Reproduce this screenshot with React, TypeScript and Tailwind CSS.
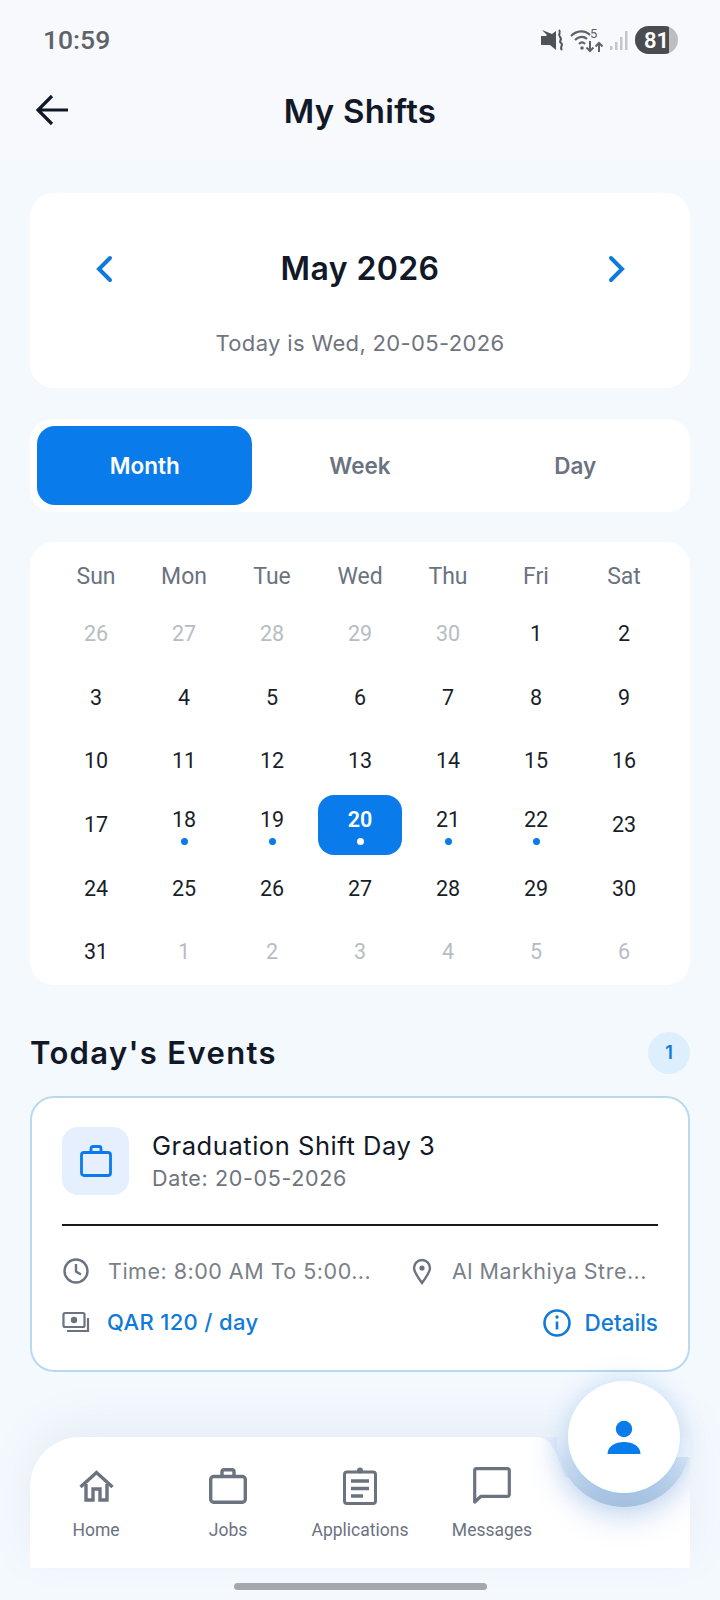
import React from "react";

const inter = "font-['Inter',sans-serif]";
const roboto = "font-['Roboto',sans-serif]";

type Cell = { d: number; muted?: boolean; dot?: boolean; sel?: boolean };

const rows: Cell[][] = [
  [{ d: 26, muted: true }, { d: 27, muted: true }, { d: 28, muted: true }, { d: 29, muted: true }, { d: 30, muted: true }, { d: 1 }, { d: 2 }],
  [{ d: 3 }, { d: 4 }, { d: 5 }, { d: 6 }, { d: 7 }, { d: 8 }, { d: 9 }],
  [{ d: 10 }, { d: 11 }, { d: 12 }, { d: 13 }, { d: 14 }, { d: 15 }, { d: 16 }],
  [{ d: 17 }, { d: 18, dot: true }, { d: 19, dot: true }, { d: 20, dot: true, sel: true }, { d: 21, dot: true }, { d: 22, dot: true }, { d: 23 }],
  [{ d: 24 }, { d: 25 }, { d: 26 }, { d: 27 }, { d: 28 }, { d: 29 }, { d: 30 }],
  [{ d: 31 }, { d: 1, muted: true }, { d: 2, muted: true }, { d: 3, muted: true }, { d: 4, muted: true }, { d: 5, muted: true }, { d: 6, muted: true }],
];

function DayCell({ c }: { c: Cell }) {
  return (
    <div className="h-[63.7px] flex items-center justify-center">
      <div className={`w-[84px] h-[60px] flex flex-col items-center justify-center ${c.dot ? "pt-[3px]" : ""} ${c.sel ? "bg-[#0a7bea] rounded-[16px]" : ""}`}>
        <span
          className={`text-[21.5px] leading-[26px] ${c.sel ? "text-white font-semibold" : c.muted ? "text-[#b9bcc2]" : "text-[#1a1f29]"}`}
        >
          {c.d}
        </span>
        {c.dot && <span className={`mt-[5px] w-[7px] h-[7px] rounded-full ${c.sel ? "bg-white" : "bg-[#0a7bea]"}`} />}
      </div>
    </div>
  );
}

function NavItem({ label, icon }: { label: string; icon: React.ReactNode }) {
  return (
    <div className="w-[132px] flex flex-col items-center">
      <div className="h-[48px] flex items-center justify-center">{icon}</div>
      <span className={`mt-[10px] text-[17.5px] leading-[20px] text-[#6b7280] ${roboto}`}>{label}</span>
    </div>
  );
}

export default function App() {
  return (
    <div className={`relative w-[720px] h-[1600px] overflow-hidden flex flex-col bg-[#f4f9fe] ${inter}`}>
      <div className="bg-[#f7f9fd] h-[160px] flex flex-col">
        {/* status bar */}
        <div className="h-[80px] pl-[43px] pr-[42px] pt-[21px] flex items-start justify-between">
          <span className={`text-[26.5px] leading-[38px] font-medium text-[#5f6268] ${roboto}`}>10:59</span>
          <div className="flex items-center gap-[6px] h-[38px]">
            <svg width="23" height="22" viewBox="0 0 23 22" fill="#4f5258">
              <path d="M0 7h5l2-2 8 8v8l-6-5H0z" />
              <path d="M1 1l14 14V2L11 5z" />
              <path d="M18 1c3 3-2 4 1 7s-2 4 1 6-2 4 1 7" fill="none" stroke="#4f5258" strokeWidth="2" />
            </svg>
            <svg width="33" height="28" viewBox="0 0 33 28" fill="none" stroke="#5f6268" strokeWidth="2.2">
              <path d="M1 10c6-6 14-6 19-1" />
              <path d="M5 14c4-4 9-4 12-1" />
              <path d="M9 18c2-2 4-2 6 0" />
              <circle cx="12" cy="22" r="1.8" fill="#5f6268" stroke="none" />
              <path d="M20 15v10m-3.5-3.5L20 25l3.5-3.5M29 26v-9m-3.5 3.5L29 17l3.5 3.5" strokeWidth="2" />
              <text x="20" y="12" fontSize="13" fill="#5f6268" stroke="none" fontFamily="Roboto, sans-serif">5</text>
            </svg>
            <svg width="20" height="22" viewBox="0 0 20 22" fill="#c4c6cb">
              <rect x="1" y="17" width="2.5" height="4" />
              <rect x="6" y="13" width="2.5" height="8" />
              <rect x="11" y="8" width="2.5" height="13" />
              <rect x="16" y="2" width="2.5" height="19" />
            </svg>
            <div className="relative w-[43px] h-[28px] rounded-full overflow-hidden bg-[#bdbec1] flex">
              <div className="w-[34px] bg-[#4b4c50]" />
              <span className={`absolute inset-0 flex items-center justify-center text-[22px] font-semibold text-white ${roboto}`}>81</span>
            </div>
          </div>
        </div>
        {/* header */}
        <div className="relative h-[62px] flex items-center justify-center">
          <svg className="absolute left-[34px] top-[11px]" width="38" height="38" viewBox="0 0 38 38" fill="none" stroke="#111827" strokeWidth="3.2">
            <path d="M34 19H5M18 5L4 19l14 14" />
          </svg>
          <h1 className="text-[33px] leading-[40px] font-semibold text-[#111827] tracking-[0.3px]">My Shifts</h1>
        </div>
      </div>

      <main className="px-[30px] pt-[33px] flex flex-col">
        {/* month card */}
        <section className="h-[195px] bg-white rounded-[24px] flex flex-col items-center pt-[56px] relative">
          <div className="w-full px-[60px] flex items-center justify-between">
            <svg width="26" height="30" viewBox="0 0 26 30" fill="none" stroke="#0f7ad8" strokeWidth="4" strokeLinecap="round" className="shrink-0">
              <path d="M20 4L9 15l11 11" />
            </svg>
            <h2 className="text-[32px] leading-[40px] font-semibold text-[#111827] tracking-[0.4px]">May 2026</h2>
            <svg width="26" height="30" viewBox="0 0 26 30" fill="none" stroke="#0f7ad8" strokeWidth="4" strokeLinecap="round" className="shrink-0">
              <path d="M7 4l11 11L7 26" />
            </svg>
          </div>
          <p className="mt-[40px] text-[22px] leading-[28px] text-[#6f747e] tracking-[0.35px]">Today is Wed, 20-05-2026</p>
        </section>

        {/* tabs */}
        <section className="mt-[31px] h-[93px] bg-white rounded-[22px] p-[7px] flex">
          <div className="flex-1 rounded-[18px] bg-[#0a7bea] text-white flex items-center justify-center text-[22.5px] font-semibold">Month</div>
          <div className="flex-1 flex items-center justify-center text-[22.5px] font-semibold text-[#6b7280]">Week</div>
          <div className="flex-1 flex items-center justify-center text-[22.5px] font-semibold text-[#6b7280]">Day</div>
        </section>

        {/* calendar */}
        <section className={`mt-[30px] h-[443px] bg-white rounded-[24px] px-[22px] pt-[16px] ${roboto}`}>
          <div className="grid grid-cols-7 h-[44px] items-start text-center text-[23px] leading-[38px] text-[#6b7280]">
            {["Sun", "Mon", "Tue", "Wed", "Thu", "Fri", "Sat"].map((d) => (
              <span key={d}>{d}</span>
            ))}
          </div>
          <div className="grid grid-cols-7">
            {rows.flat().map((c, i) => (
              <DayCell key={i} c={c} />
            ))}
          </div>
        </section>

        {/* events heading */}
        <div className="mt-[46px] h-[43px] flex items-center justify-between">
          <h2 className="text-[31px] leading-[40px] font-semibold text-[#111827] tracking-[1.35px]">Today's Events</h2>
          <span className="w-[42px] h-[42px] rounded-full bg-[#ddeefc] flex items-center justify-center text-[18px] font-semibold text-[#0f7ad8]">1</span>
        </div>

        {/* event card */}
        <section className="mt-[22px] h-[276px] bg-white rounded-[24px] border-2 border-[#b9d9f2] px-[30px] pt-[29px]">
          <div className="flex">
            <div className="w-[67px] h-[68px] rounded-[16px] bg-[#e6effd] flex items-center justify-center">
              <svg width="34" height="34" viewBox="0 0 34 34" fill="none" stroke="#0a7bea" strokeWidth="2.8">
                <rect x="2.5" y="8.5" width="29" height="23" rx="2.5" />
                <path d="M12 8V4.5A2 2 0 0 1 14 2.5h6a2 2 0 0 1 2 2V8" />
              </svg>
            </div>
            <div className="ml-[23px] flex flex-col pt-[3px]">
              <span className="text-[25.5px] leading-[32px] text-[#111827] tracking-[0.55px]">Graduation Shift Day 3</span>
              <span className="text-[21.5px] leading-[28px] text-[#6f747e] tracking-[0.65px] mt-[2px]">Date: 20-05-2026</span>
            </div>
          </div>
          <div className="mt-[29px] h-[2px] bg-[#1a1a1a]" />
          <div className="mt-[30px] flex items-center h-[30px] text-[21.5px] text-[#7a7f88] tracking-[0.5px]">
            <svg width="28" height="28" viewBox="0 0 28 28" fill="none" stroke="#6b7280" strokeWidth="2.4" className="shrink-0">
              <circle cx="14" cy="14" r="11.5" />
              <path d="M14 7v7.5l5 3" />
            </svg>
            <span className="ml-[18px] w-[264px] truncate">Time: 8:00 AM To 5:00...</span>
            <svg className="ml-[38px] shrink-0" width="24" height="28" viewBox="0 0 24 28" fill="none" stroke="#6b7280" strokeWidth="2.4">
              <path d="M12 26C7 19 4 15 4 11a8 8 0 0 1 16 0c0 4-3 8-8 15z" />
              <circle cx="12" cy="11" r="2.6" fill="#6b7280" stroke="none" />
            </svg>
            <span className="ml-[18px] flex-1 truncate">Al Markhiya Stre...</span>
          </div>
          <div className="mt-[20px] flex items-center justify-between h-[33px]">
            <div className="flex items-center">
              <svg width="28" height="26" viewBox="0 0 28 26" fill="none" stroke="#6b7280" strokeWidth="2.2">
                <rect x="1.5" y="3" width="21" height="14" rx="1.5" />
                <circle cx="12" cy="10" r="3.2" fill="#6b7280" stroke="none" />
                <path d="M26 8v13H5" />
              </svg>
              <span className="ml-[17px] text-[22px] font-medium text-[#0f7ad8] tracking-[0.35px]">QAR 120 / day</span>
            </div>
            <div className="flex items-center">
              <svg width="30" height="30" viewBox="0 0 30 30" fill="none" stroke="#0f7ad8" strokeWidth="2.6">
                <circle cx="15" cy="15" r="12.5" />
                <path d="M15 13.5v8" />
                <circle cx="15" cy="9" r="1.7" fill="#0f7ad8" stroke="none" />
              </svg>
              <span className="ml-[13px] text-[22.5px] font-medium text-[#0f7ad8]">Details</span>
            </div>
          </div>
        </section>
      </main>

      {/* bottom nav */}
      <nav className="absolute left-[30px] top-[1437px] w-[660px] h-[131px] rounded-tl-[50px] shadow-[0_-14px_40px_rgba(120,140,170,0.1)] overflow-hidden bg-white">
        <div className="flex pt-[25px]">
          <NavItem
            label="Home"
            icon={
              <svg width="35" height="32" viewBox="0 0 35 32" fill="none" stroke="#6b7280" strokeWidth="3.4">
                <path d="M1.5 17L17.5 2.5 33.5 17" />
                <path d="M7 14v16h7V19h7v11h7V14" />
              </svg>
            }
          />
          <NavItem
            label="Jobs"
            icon={
              <svg width="38" height="36" viewBox="0 0 38 36" fill="none" stroke="#6b7280" strokeWidth="3.4">
                <rect x="1.7" y="8.5" width="34.6" height="25.8" rx="3" />
                <path d="M13 8V3.7a2 2 0 0 1 2-2h8a2 2 0 0 1 2 2V8" />
              </svg>
            }
          />
          <NavItem
            label="Applications"
            icon={
              <svg width="34" height="38" viewBox="0 0 34 38" fill="none" stroke="#6b7280" strokeWidth="3">
                <rect x="1.5" y="5" width="31" height="31.5" rx="2.5" />
                <path d="M8 14h18M8 21.5h18M8 29h12" strokeWidth="3.4" />
                <circle cx="17" cy="3.5" r="3" fill="#6b7280" stroke="none" />
              </svg>
            }
          />
          <NavItem
            label="Messages"
            icon={
              <svg width="38" height="38" viewBox="0 0 38 38" fill="none" stroke="#6b7280" strokeWidth="3.2">
                <path d="M1.7 3.5a1.8 1.8 0 0 1 1.8-1.8h31a1.8 1.8 0 0 1 1.8 1.8v24a1.8 1.8 0 0 1-1.8 1.8H8L1.7 35z" strokeLinejoin="round" />
              </svg>
            }
          />
        </div>
        {/* notch behind the floating button */}
        <svg className="absolute left-[505px] top-0" width="60" height="40" viewBox="0 0 60 40" fill="#eff5fc">
          <path d="M0 0C12 0 16 6 22 18L30 40H60V0z" />
        </svg>
        <div className="absolute left-[527px] top-[-64px] w-[134px] h-[134px] rounded-full bg-gradient-to-b from-[#e6effa] from-50% via-[#c9dbee] via-75% to-[#a9c3df] shadow-[0_10px_30px_rgba(70,130,210,0.3)]" />
        <div className="absolute left-[630px] top-0 w-[30px] h-[20px] bg-[#eff6fd]" />
      </nav>

      {/* FAB */}
      <div className="absolute left-[568px] top-[1381px] w-[112px] h-[112px] rounded-full bg-white shadow-[0_0_26px_rgba(20,110,210,0.22)] flex items-center justify-center">
        <svg width="34" height="35" viewBox="0 0 34 35" fill="#0a7bea">
          <circle cx="17" cy="9" r="8.2" />
          <path d="M0.5 34c0-8 8-12 16.5-12s16.5 4 16.5 12z" />
        </svg>
      </div>

      {/* gesture bar */}
      <div className="absolute left-[234px] top-[1583px] w-[253px] h-[7px] rounded-full bg-[#a4a7ad]" />
    </div>
  );
}
